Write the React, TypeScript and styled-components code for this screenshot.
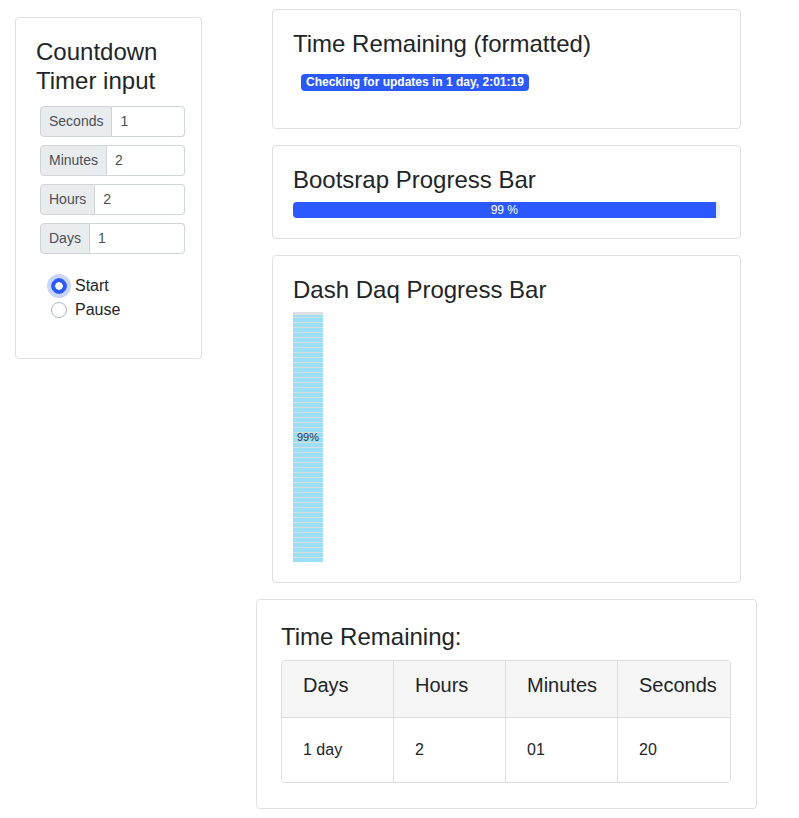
import React from "react";
import styled, { createGlobalStyle } from "styled-components";

const Global = createGlobalStyle`
  html, body { margin: 0; padding: 0; background: #fff; }
  body {
    font-family: "Liberation Sans", Arial, sans-serif;
    font-size: 16px;
    line-height: 1.5;
    color: #212529;
  }
  * { box-sizing: border-box; }
`;

const Page = styled.div`
  display: flex;
  align-items: flex-start;
  width: 799px;
`;

const Card = styled.div<{ $pad?: string }>`
  border: 1px solid #dfdfdf;
  border-radius: 4px;
  background: #fff;
  padding: ${(p) => p.$pad || "20px"};
`;

const LeftCard = styled(Card)`
  width: 187px;
  margin: 17px 0 0 15px;
  flex: none;
`;

const RightCol = styled.div`
  width: 501px;
  margin-left: 54px;
  padding-top: 9px;
  display: flex;
  flex-direction: column;
  gap: 16px;
`;

const InnerCard = styled(Card)`
  margin: 0 16px;
`;

const Title = styled.h3<{ $mb?: number }>`
  margin: 0 0 ${(p) => (p.$mb ?? 8)}px 0;
  font-size: 24px;
  font-weight: 400;
  line-height: 1.2;
  color: #212529;
`;

const Groups = styled.div`
  margin: 10px 0 0 4px;
  display: flex;
  flex-direction: column;
  gap: 8px;
  width: 145px;
`;

const Group = styled.div`
  display: flex;
  height: 31px;
  width: 145px;
  font-size: 14px;
`;

const GroupLabel = styled.span`
  display: flex;
  align-items: center;
  padding: 0 8px;
  background: #e9ecef;
  border: 1px solid #ced4da;
  border-radius: 4px 0 0 4px;
  color: #495057;
  white-space: nowrap;
`;

const GroupInput = styled.input`
  flex: 1;
  min-width: 0;
  border: 1px solid #ced4da;
  border-left: none;
  border-radius: 0 4px 4px 0;
  padding: 0 8px;
  font: inherit;
  font-size: 14px;
  color: #495057;
  outline: none;
  background: #fff;
`;

const Radios = styled.div`
  margin: 20px 0 16px 15px;
  display: flex;
  flex-direction: column;
`;

const RadioRow = styled.label`
  display: flex;
  align-items: center;
  height: 24px;
  gap: 8px;
  font-size: 16px;
  color: #212529;
`;

const RadioDot = styled.span<{ $on?: boolean }>`
  width: 16px;
  height: 16px;
  border-radius: 50%;
  flex: none;
  border: 1px solid ${(p) => (p.$on ? "#2b59ff" : "#adb5bd")};
  background: ${(p) =>
    p.$on ? "radial-gradient(circle, #fff 0 3.5px, #2b59ff 4px)" : "#fff"};
  box-shadow: ${(p) => (p.$on ? "0 0 0 4px rgba(43, 89, 255, 0.25)" : "none")};
`;

const BadgeRow = styled.div`
  padding: 7px 0 17px 8px;
  display: flex;
`;

const Badge = styled.span`
  display: inline-flex;
  align-items: center;
  height: 17px;
  padding: 0 5px;
  background: #2b59ff;
  color: #fff;
  font-size: 12px;
  font-weight: 700;
  border-radius: 4px;
  white-space: nowrap;
`;

const Track = styled.div`
  height: 16px;
  background: #e9ecef;
  border-radius: 4px;
  overflow: hidden;
  display: flex;
`;

const Fill = styled.div`
  background: #2b59ff;
  color: #fff;
  font-size: 12px;
  line-height: 16px;
  text-align: center;
`;

const DaqBar = styled.div`
  position: relative;
  width: 30px;
  height: 250px;
  background: #e0e0e0;
  display: flex;
  flex-direction: column;
  justify-content: flex-end;
`;

const DaqFill = styled.div`
  background: repeating-linear-gradient(
    to top,
    #9adff8 0px,
    #9adff8 4px,
    #dcdcdc 4px,
    #dcdcdc 5px
  );
`;

const DaqLabel = styled.span`
  position: absolute;
  left: 0;
  right: 0;
  top: 50%;
  transform: translateY(-50%);
  text-align: center;
  font-size: 11px;
  line-height: 1;
  color: #333;
`;

const Table = styled.div`
  border: 1px solid #dcdcdc;
  border-radius: 4px;
  overflow: hidden;
  display: grid;
  grid-template-columns: repeat(4, 1fr);
  width: 450px;
`;

const Cell = styled.div<{ $head?: boolean; $last?: boolean }>`
  height: ${(p) => (p.$head ? "57px" : "64px")};
  display: flex;
  align-items: ${(p) => (p.$head ? "flex-start" : "center")};
  padding: ${(p) => (p.$head ? "12px 0 0 21px" : "0 0 0 21px")};
  line-height: 24px;
  background: ${(p) => (p.$head ? "#f5f5f5" : "#fff")};
  font-size: ${(p) => (p.$head ? "20px" : "16px")};
  color: #212529;
  border-right: ${(p) => (p.$last ? "none" : "1px solid #dcdcdc")};
  border-bottom: ${(p) => (p.$head ? "1px solid #dcdcdc" : "none")};
`;

const inputs = [
  ["Seconds", "1"],
  ["Minutes", "2"],
  ["Hours", "2"],
  ["Days", "1"],
];

const heads = ["Days", "Hours", "Minutes", "Seconds"];
const vals = ["1 day", "2", "01", "20"];

export default function App() {
  return (
    <>
      <Global />
      <Page>
        <LeftCard>
          <Title $mb={0}>
            Countdown
            <br />
            Timer input
          </Title>
          <Groups>
            {inputs.map(([l, v]) => (
              <Group key={l}>
                <GroupLabel>{l}</GroupLabel>
                <GroupInput defaultValue={v} />
              </Group>
            ))}
          </Groups>
          <Radios>
            <RadioRow>
              <RadioDot $on />
              Start
            </RadioRow>
            <RadioRow>
              <RadioDot />
              Pause
            </RadioRow>
          </Radios>
        </LeftCard>
        <RightCol>
          <InnerCard>
            <Title>Time Remaining (formatted)</Title>
            <BadgeRow>
              <Badge>Checking for updates in 1 day, 2:01:19</Badge>
            </BadgeRow>
          </InnerCard>
          <InnerCard>
            <Title $mb={7}>Bootsrap Progress Bar</Title>
            <Track>
              <Fill style={{ width: "99%" }}>99 %</Fill>
            </Track>
          </InnerCard>
          <InnerCard>
            <Title $mb={8}>Dash Daq Progress Bar</Title>
            <DaqBar>
              <DaqFill style={{ height: "99%" }} />
              <DaqLabel>99%</DaqLabel>
            </DaqBar>
          </InnerCard>
          <Card $pad="23px 24px 25px 24px">
            <Title>Time Remaining:</Title>
            <Table>
              {heads.map((h, i) => (
                <Cell key={h} $head $last={i === 3}>
                  {h}
                </Cell>
              ))}
              {vals.map((v, i) => (
                <Cell key={i} $last={i === 3}>
                  {v}
                </Cell>
              ))}
            </Table>
          </Card>
        </RightCol>
      </Page>
    </>
  );
}
